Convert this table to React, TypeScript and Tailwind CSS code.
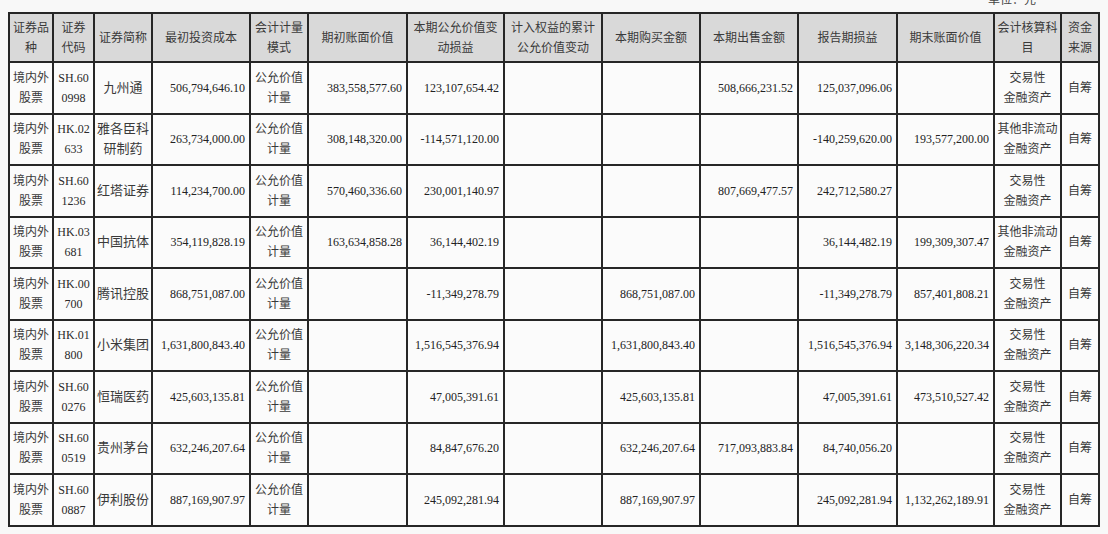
import React from 'react';

type Row = {
  code: [string, string];
  name: string;
  cost: string;
  open: string;
  change: string;
  equity: string;
  buy: string;
  sell: string;
  pl: string;
  close: string;
  acct: [string, string];
};

const TRADING: [string, string] = ['交易性', '金融资产'];
const OTHER: [string, string] = ['其他非流动', '金融资产'];

const rows: Row[] = [
  { code: ['SH.60', '0998'], name: '九州通', cost: '506,794,646.10', open: '383,558,577.60', change: '123,107,654.42', equity: '', buy: '', sell: '508,666,231.52', pl: '125,037,096.06', close: '', acct: TRADING },
  { code: ['HK.02', '633'], name: '雅各臣科研制药', cost: '263,734,000.00', open: '308,148,320.00', change: '-114,571,120.00', equity: '', buy: '', sell: '', pl: '-140,259,620.00', close: '193,577,200.00', acct: OTHER },
  { code: ['SH.60', '1236'], name: '红塔证券', cost: '114,234,700.00', open: '570,460,336.60', change: '230,001,140.97', equity: '', buy: '', sell: '807,669,477.57', pl: '242,712,580.27', close: '', acct: TRADING },
  { code: ['HK.03', '681'], name: '中国抗体', cost: '354,119,828.19', open: '163,634,858.28', change: '36,144,402.19', equity: '', buy: '', sell: '', pl: '36,144,482.19', close: '199,309,307.47', acct: OTHER },
  { code: ['HK.00', '700'], name: '腾讯控股', cost: '868,751,087.00', open: '', change: '-11,349,278.79', equity: '', buy: '868,751,087.00', sell: '', pl: '-11,349,278.79', close: '857,401,808.21', acct: TRADING },
  { code: ['HK.01', '800'], name: '小米集团', cost: '1,631,800,843.40', open: '', change: '1,516,545,376.94', equity: '', buy: '1,631,800,843.40', sell: '', pl: '1,516,545,376.94', close: '3,148,306,220.34', acct: TRADING },
  { code: ['SH.60', '0276'], name: '恒瑞医药', cost: '425,603,135.81', open: '', change: '47,005,391.61', equity: '', buy: '425,603,135.81', sell: '', pl: '47,005,391.61', close: '473,510,527.42', acct: TRADING },
  { code: ['SH.60', '0519'], name: '贵州茅台', cost: '632,246,207.64', open: '', change: '84,847,676.20', equity: '', buy: '632,246,207.64', sell: '717,093,883.84', pl: '84,740,056.20', close: '', acct: TRADING },
  { code: ['SH.60', '0887'], name: '伊利股份', cost: '887,169,907.97', open: '', change: '245,092,281.94', equity: '', buy: '887,169,907.97', sell: '', pl: '245,092,281.94', close: '1,132,262,189.91', acct: TRADING },
];

// header lines broken where the printed table breaks them
const headers: string[][] = [
  ['证券品', '种'],
  ['证券', '代码'],
  ['证券简称'],
  ['最初投资成本'],
  ['会计计量', '模式'],
  ['期初账面价值'],
  ['本期公允价值变', '动损益'],
  ['计入权益的累计', '公允价值变动'],
  ['本期购买金额'],
  ['本期出售金额'],
  ['报告期损益'],
  ['期末账面价值'],
  ['会计核算科', '目'],
  ['资金', '来源'],
];

const cell = 'border-2 border-[#262626] p-0 align-middle';
const num = `${cell} text-right pr-[4px] whitespace-nowrap text-[12px] text-[#222]`;
const zh = `${cell} text-center text-[12px] leading-[20px] text-[#3a3a3a]`;

export default function App() {
  return (
    <div
      className="min-h-screen w-[1108px] h-[534px] overflow-hidden bg-[#f8f8f8] pl-[8px]"
      style={{ fontFamily: '"Liberation Serif", "Noto Sans CJK SC", serif' }}
    >
      <div className="h-[12px] flex justify-end pr-[72px]">
        <span className="-mt-[7px] text-[12px] leading-[14px] text-[#444]">单位：元</span>
      </div>

      <table className="table-fixed border-collapse w-[1090px]">
        <colgroup>
          <col className="w-[44px]" />
          <col className="w-[41px]" />
          <col className="w-[58px]" />
          <col className="w-[98px]" />
          <col className="w-[58px]" />
          <col className="w-[99px]" />
          <col className="w-[97px]" />
          <col className="w-[98px]" />
          <col className="w-[98px]" />
          <col className="w-[98px]" />
          <col className="w-[99px]" />
          <col className="w-[97px]" />
          <col className="w-[67px]" />
          <col className="w-[38px]" />
        </colgroup>
        <thead>
          <tr className="h-[49px] bg-[#d9d9d9]">
            {headers.map((lines) => (
              <th key={lines.join('')} className={`${zh} font-normal whitespace-nowrap overflow-hidden`}>
                {lines.map((l, i) => (
                  <div key={i}>{l}</div>
                ))}
              </th>
            ))}
          </tr>
        </thead>
        <tbody className="bg-[#fbfbfb]">
          {rows.map((r) => (
            <tr key={r.name} className="h-[51.5px]">
              <td className={`${zh} whitespace-nowrap`}>
                境内外
                <br />
                股票
              </td>
              <td className={`${cell} text-center text-[12px] leading-[20px] text-[#2a2a2a] whitespace-nowrap`}>
                {r.code[0]}
                <br />
                {r.code[1]}
              </td>
              <td className={`${zh} text-[13px] px-[2px]`}>{r.name}</td>
              <td className={num}>{r.cost}</td>
              <td className={`${zh} px-[4px]`}>
                公允价值
                <br />
                计量
              </td>
              <td className={num}>{r.open}</td>
              <td className={num}>{r.change}</td>
              <td className={num}>{r.equity}</td>
              <td className={num}>{r.buy}</td>
              <td className={num}>{r.sell}</td>
              <td className={num}>{r.pl}</td>
              <td className={num}>{r.close}</td>
              <td className={`${zh} whitespace-nowrap`}>
                {r.acct[0]}
                <br />
                {r.acct[1]}
              </td>
              <td className={zh}>自筹</td>
            </tr>
          ))}
        </tbody>
      </table>
    </div>
  );
}
